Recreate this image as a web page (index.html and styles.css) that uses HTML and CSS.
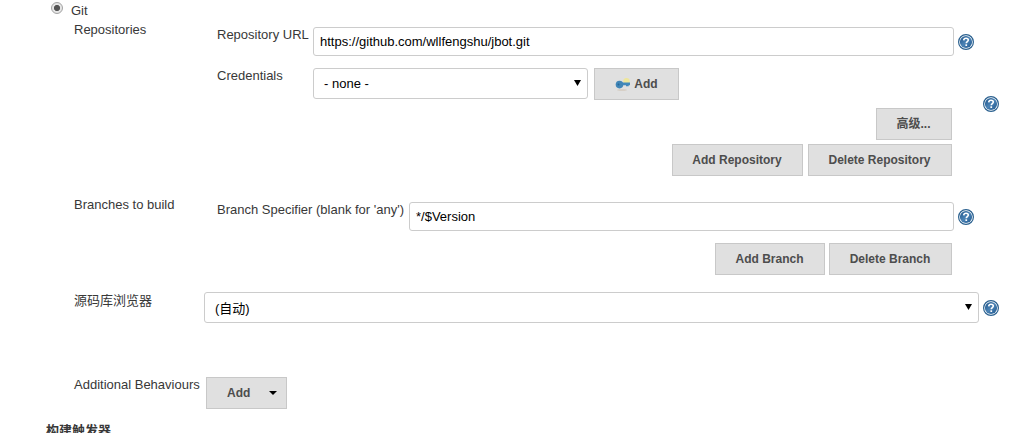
FILE: index.html
```html
<!DOCTYPE html>
<html lang="zh-CN">
<head>
<meta charset="utf-8">
<title>Git</title>
<link rel="stylesheet" href="styles.css">
</head>
<body>
<svg class="defs" width="0" height="0">
  <defs>
    <linearGradient id="blue" x1="0" y1="0" x2="1" y2="1"><stop offset="0" stop-color="#1d5288"/><stop offset=".5" stop-color="#4b83b5"/><stop offset="1" stop-color="#1f568d"/></linearGradient>
    <symbol id="help" viewBox="0 0 16 16">
      <circle cx="8" cy="8" r="7.4" fill="#fff" stroke="#2a608f" stroke-width="1.2"/>
      <circle cx="8" cy="8" r="6.1" fill="url(#blue)"/>
      <path d="M5.7 6.4C5.8 4.9 6.7 4.2 8 4.2c1.4 0 2.3.7 2.3 1.8 0 1.5-2 1.6-2 3.2" fill="none" stroke="#fff" stroke-width="1.6"/>
      <rect x="7.4" y="10.3" width="1.7" height="1.7" fill="#fff"/>
    </symbol>
  </defs>
</svg>
<main class="form">
  <div class="scm"><span class="radio"></span><span class="scm-name">Git</span></div>

  <section class="section repositories">
    <div class="label">Repositories</div>
    <div class="body">
      <div class="field">
        <div class="name name-fixed">Repository URL</div>
        <div class="input">https://github.com/wllfengshu/jbot.git</div>
        <svg class="help"><use href="#help"/></svg>
      </div>
      <div class="field credentials">
        <div class="name name-fixed">Credentials</div>
        <div class="select">- none -<svg class="arrow" viewBox="0 0 7 6"><path d="M0 0H7L3.5 6Z"/></svg></div>
        <div class="button button-key"><svg class="key" viewBox="0 0 16 16"><ellipse cx="7" cy="14" rx="5" ry=".7" fill="#d3c9bd"/><circle cx="11.5" cy="5.3" r="3.2" fill="#eee69b"/><path d="M6 6.6h9v2.6h-1.3v1H11v-1H6z" fill="#4389bb"/><circle cx="4.5" cy="8.6" r="3.8" fill="#4186b7"/><circle cx="3.5" cy="8.4" r="1" fill="#256799"/></svg>Add</div>
      </div>
      <div class="buttons advanced"><div class="button">高级...</div></div>
      <div class="buttons repo-buttons"><div class="button w131">Add Repository</div><div class="button w144">Delete Repository</div></div>
    </div>
    <svg class="help help-section"><use href="#help"/></svg>
  </section>

  <section class="section branches">
    <div class="label">Branches to build</div>
    <div class="body">
      <div class="field">
        <div class="name name-wide">Branch Specifier (blank for 'any')</div>
        <div class="input">*/$Version</div>
        <svg class="help"><use href="#help"/></svg>
      </div>
      <div class="buttons branch-buttons"><div class="button w110">Add Branch</div><div class="button w123">Delete Branch</div></div>
    </div>
  </section>

  <section class="section browser">
    <div class="label">源码库浏览器</div>
    <div class="select select-wide">(自动)<svg class="arrow" viewBox="0 0 7 6"><path d="M0 0H7L3.5 6Z"/></svg></div>
    <svg class="help"><use href="#help"/></svg>
  </section>

  <section class="section behaviours">
    <div class="label">Additional Behaviours</div>
    <div class="button button-menu">Add<svg class="caret" viewBox="0 0 8 4"><path d="M0 0H8L4 4Z"/></svg></div>
  </section>

  <h2 class="heading">构建触发器</h2>
</main>
</body>
</html>
```
FILE: styles.css
```css
* { box-sizing: border-box; }
html, body { overflow: hidden; }
body {
  margin: 0;
  background: #fff;
  color: #383838;
  font: 13px/18px "Liberation Sans", "Noto Sans CJK SC", sans-serif;
  white-space: nowrap;
}
svg { display: block; flex: none; }
.defs { position: absolute; }
.form { height: 433px; overflow: hidden; }
.scm { display: flex; height: 20px; padding: 2px 0 0 51px; }
.radio {
  width: 12px; height: 12px; margin: 0 8px 0 0;
  border: 1px solid #a3a3a3; border-radius: 50%;
  background: radial-gradient(circle, #555 0 2.7px, #e6e6e6 3.5px);
}
.section { display: flex; padding-left: 74px; }
.label { flex: none; width: 143px; }
.body { flex: none; width: 757px; }
.field { display: flex; }
.name { flex: none; }
.name-fixed { width: 96px; }
.name-wide { width: 192px; }
.input {
  flex: 1; height: 29px; padding: 0 6px;
  border: 1px solid #ccc; border-radius: 3px;
  color: #000; line-height: 28px; font-size: 13px;
}
.help { width: 16px; height: 16px; margin: 7px 0 0 4px; }
.select {
  display: flex; align-items: center; justify-content: space-between;
  width: 275px; height: 31px; padding: 0 6px 0 10px;
  border: 1px solid #ccc; border-radius: 3px; color: #000;
}
.arrow { width: 7px; height: 6px; margin-top: -1px; }
.button {
  display: flex; align-items: center; justify-content: center; flex: none;
  height: 32px; border: 1px solid #c8c8c8; background: #e0e0e0;
  color: #4d4d4d; font-size: 12px; font-weight: bold;
}
.buttons { display: flex; justify-content: flex-end; padding-right: 22px; }
.buttons .button { padding-right: 1px; }

.repositories { height: 175px; }
.repositories .label { padding-top: 1px; }
.repositories .body { padding-top: 7px; }
.repositories .name { margin-top: -1px; }
.credentials { margin-top: 12px; }
.button-key { width: 85px; margin-left: 6px; }
.key { width: 16px; height: 16px; margin-right: 3px; }
.advanced { margin-top: 8px; }
.advanced .button { width: 76px; }
.repo-buttons { gap: 5px; margin-top: 4px; }
.w131 { width: 131px; }
.w144 { width: 144px; }
.help-section { margin: 76px 0 0 9px; }

.branches { height: 97px; }
.branches .label { padding-top: 1px; }
.branches .body { padding-top: 7px; }
.branches .name { margin-top: -1px; }
.branch-buttons { gap: 4px; margin-top: 12px; }
.w110 { width: 110px; }
.w123 { width: 123px; }

.browser { height: 85px; }
.browser .label { width: 130px; }
.select-wide { width: 775px; }
.browser .select-wide { padding-top: 2px; }
.browser .help { margin-top: 8px; }
.browser .arrow { margin-top: -3px; }

.behaviours { height: 45px; }
.behaviours .label { width: 132px; margin-top: -1px; }
.button-menu { width: 81px; justify-content: flex-start; padding-left: 20px; }
.caret { width: 8px; height: 4px; margin-left: 19px; }

.heading { margin: 0 0 0 46px; font-size: 13px; line-height: 18px; }
```
